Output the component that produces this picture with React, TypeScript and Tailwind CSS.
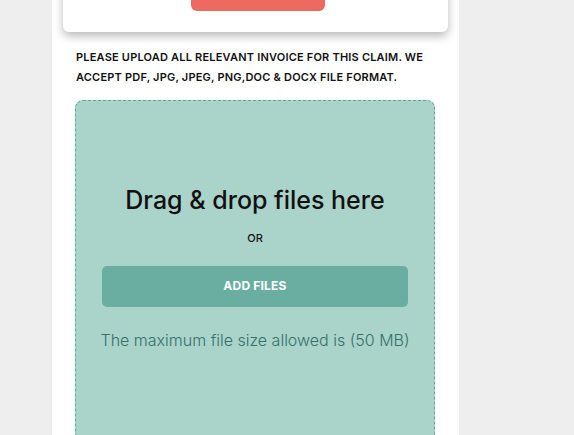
import React from "react";

const font = { fontFamily: "Inter, 'Open Sans', 'Liberation Sans', sans-serif" };

const UploadPanel: React.FC = () => {
  return (
    <div className="w-[407px] ml-[52px] bg-white min-h-[435px] px-[11px]">
      {/* top card with submit button */}
      <div className="mt-[-60px] h-[92px] rounded-b-[6px] bg-white shadow-[0_4px_10px_rgba(0,0,0,0.28)] flex items-end justify-center pb-[21px]">
        <div className="ml-[5px] w-[134px] h-[40px] rounded-[6px] bg-[#ec6a60]" />
      </div>

      <p className="mt-[15px] px-[13px] text-[11px] leading-[20px] font-semibold uppercase text-[#111] tracking-[0.2px]">
        Please upload all relevant invoice for this claim. We accept PDF, JPG, JPEG, PNG,DOC &amp; DOCX file format.
      </p>

      <div className="mt-[13px] ml-[12px] w-[360px] h-[345px] rounded-[8px] border border-dashed border-[#5fa899] bg-[#aad3ca] flex flex-col items-center">
        <h2 className="mt-[82px] text-[25px] leading-[34px] font-medium text-[#111]">
          Drag &amp; drop files here
        </h2>
        <div className="mt-[13px] text-[11px] font-medium text-[#111]">OR</div>
        <button className="mt-[19px] w-[306px] h-[41px] rounded-[5px] bg-[#69aea0] text-white text-[12px] font-bold uppercase tracking-[0.2px]">
          Add files
        </button>
        <p className="mt-[21px] text-[16px] font-light text-[#35716a]">
          The maximum file size allowed is (50 MB)
        </p>
      </div>
    </div>
  );
};

export default function App() {
  return (
    <div className="w-[574px] h-[435px] overflow-hidden bg-[#eeeeee]" style={font}>
      <UploadPanel />
    </div>
  );
}
